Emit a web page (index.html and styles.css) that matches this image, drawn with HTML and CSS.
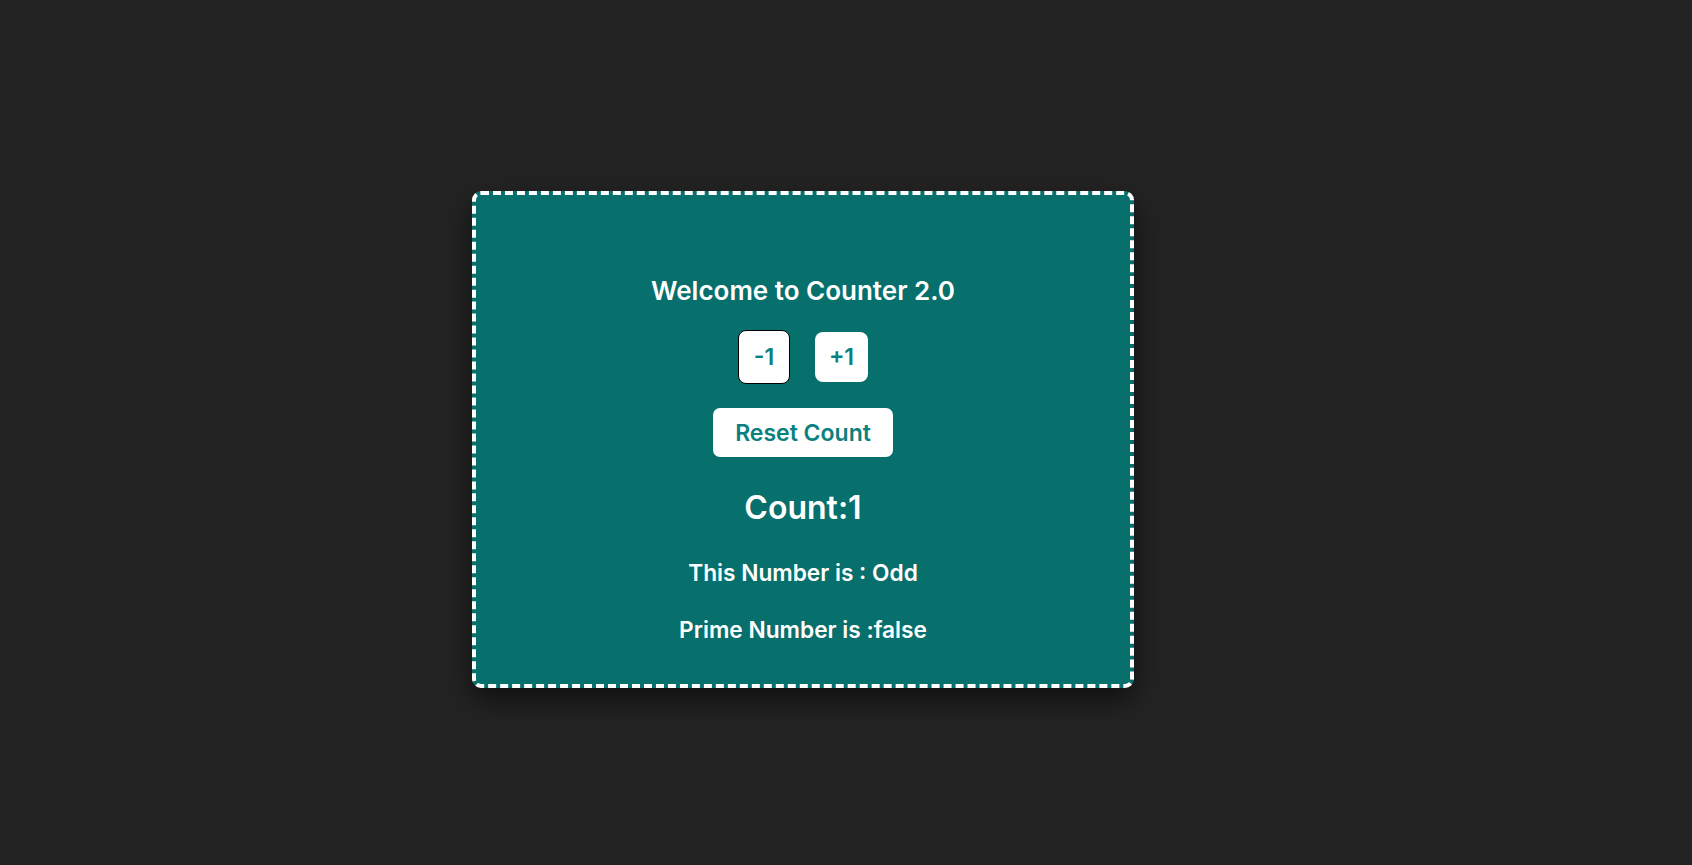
FILE: index.html
```html
<!DOCTYPE html>
<html lang="en">
<head>
<meta charset="utf-8">
<title>Counter 2.0</title>
<link rel="stylesheet" href="styles.css">
</head>
<body>
<main class="page">
  <section class="card">
    <h2 class="title">Welcome to Counter 2.0</h2>
    <div class="controls">
      <button class="btn btn-step btn-minus">-1</button>
      <button class="btn btn-step btn-plus">+1</button>
    </div>
    <button class="btn btn-reset">Reset Count</button>
    <h1 class="count">Count:1</h1>
    <p class="info info-parity">This Number is : Odd</p>
    <p class="info info-prime">Prime Number is :false</p>
  </section>
</main>
</body>
</html>
```
FILE: styles.css
```css
* { box-sizing: border-box; }
html, body { margin: 0; padding: 0; }
body {
  background: #232323;
  font-family: Inter, "Noto Sans", sans-serif;
  color: #ffffff;
}
.page {
  height: 865px;
  display: flex;
  justify-content: center;
  padding-top: 191px;
  padding-right: 86px;
}
.card {
  width: 662px;
  height: 497px;
  background: #076f6c;
  border: 4px dashed #ffffff;
  border-radius: 9px;
  box-shadow: 0 12px 28px rgba(0, 0, 0, 0.55);
  display: flex;
  flex-direction: column;
  align-items: center;
  padding-top: 81px;
}
.title {
  margin: 0;
  font-size: 26px;
  line-height: 30px;
  font-weight: 600;
}
.controls {
  margin-top: 24px;
  height: 54px;
  display: flex;
  align-items: center;
  gap: 25px;
}
.btn {
  font-family: Inter, "Noto Sans", sans-serif;
  font-weight: 600;
  font-size: 23px;
  color: #0b8080;
  background: #ffffff;
  border: none;
  border-radius: 8px;
  padding: 0;
  cursor: pointer;
}
.btn-minus {
  width: 52px;
  height: 54px;
  border: 1.5px solid #000000;
}
.btn-plus {
  width: 53px;
  height: 50px;
}
.btn-reset {
  margin-top: 24px;
  width: 180px;
  height: 49px;
  border-radius: 7px;
}
.count {
  margin: 32px 0 0;
  font-size: 32px;
  line-height: 38px;
  font-weight: 600;
}
.info {
  margin: 0;
  font-size: 22.7px;
  line-height: 26px;
  font-weight: 600;
}
.info-parity { margin-top: 33.4px; }
.info-prime { margin-top: 31px; }
```
